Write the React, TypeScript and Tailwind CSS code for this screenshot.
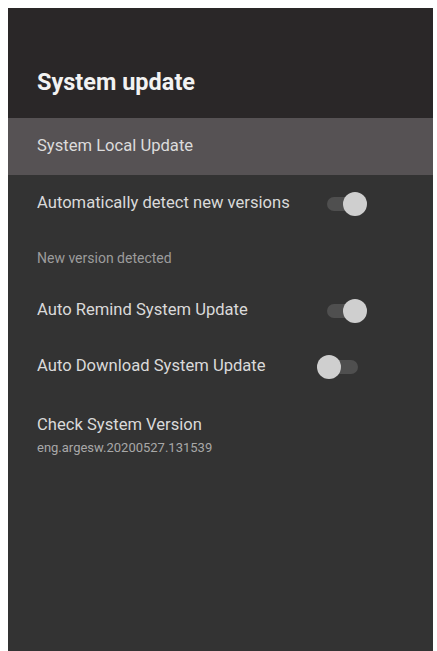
import React, { useState } from 'react';

type Setting = {
  id: string;
  label: string;
  on: boolean;
};

const Toggle: React.FC<{ on: boolean; onClick: () => void }> = ({ on, onClick }) => (
  <button onClick={onClick} className="relative w-[50px] h-[24px] shrink-0">
    <span
      className={`absolute top-[5px] h-[14px] w-[30px] rounded-full bg-[#4f4f4f] ${
        on ? 'left-[10px]' : 'left-[11px]'
      }`}
    />
    <span
      className={`absolute top-0 h-[24px] w-[24px] rounded-full bg-[#cfcfcf] ${
        on ? 'right-0' : 'left-0'
      }`}
    />
  </button>
);

const ToggleRow: React.FC<{ setting: Setting; height: string; onToggle: () => void }> = ({
  setting,
  height,
  onToggle,
}) => (
  <div className={`flex items-center justify-between pl-[29px] pr-[66px] ${height}`}>
    <span className="text-[16.6px] text-[#dadada]">{setting.label}</span>
    <Toggle on={setting.on} onClick={onToggle} />
  </div>
);

export default function App() {
  const [settings, setSettings] = useState<Setting[]>([
    { id: 'detect', label: 'Automatically detect new versions', on: true },
    { id: 'remind', label: 'Auto Remind System Update', on: true },
    { id: 'download', label: 'Auto Download System Update', on: false },
  ]);

  const toggle = (id: string) =>
    setSettings(prev => prev.map(s => (s.id === id ? { ...s, on: !s.on } : s)));

  const [detect, remind, download] = settings;

  return (
    <div
      className="w-[437px] h-[651px] bg-white pt-[8px] pl-[8px] pr-[4px] flex flex-col"
      style={{ fontFamily: 'Roboto, "Noto Sans", sans-serif' }}
    >
      <div className="flex-1 flex flex-col bg-[#333333]">
        {/* Header */}
        <div className="h-[110px] bg-[#2a2728] pl-[29px] pt-[59px]">
          <h1 className="text-[23.5px] leading-[30px] font-bold text-[#f2f2f2]">System update</h1>
        </div>

        {/* Focused item */}
        <div className="h-[57px] bg-[#565254] flex items-center pl-[29px]">
          <span className="text-[16.6px] text-[#dcdcdc]">System Local Update</span>
        </div>

        <ToggleRow setting={detect} height="h-[57px]" onToggle={() => toggle(detect.id)} />

        <div className="h-[52px] flex items-center pl-[29px]">
          <span className="text-[14px] text-[#9c9c9c]">New version detected</span>
        </div>

        <ToggleRow setting={remind} height="h-[53px]" onToggle={() => toggle(remind.id)} />
        <ToggleRow setting={download} height="h-[59px]" onToggle={() => toggle(download.id)} />

        {/* Version info */}
        <div className="pl-[29px] pt-[18px] flex flex-col">
          <span className="text-[16.6px] leading-[21px] text-[#dadada]">Check System Version</span>
          <span className="text-[13px] leading-[16px] text-[#a8a8a8] mt-[5px]">
            eng.argesw.20200527.131539
          </span>
        </div>
      </div>
    </div>
  );
}
